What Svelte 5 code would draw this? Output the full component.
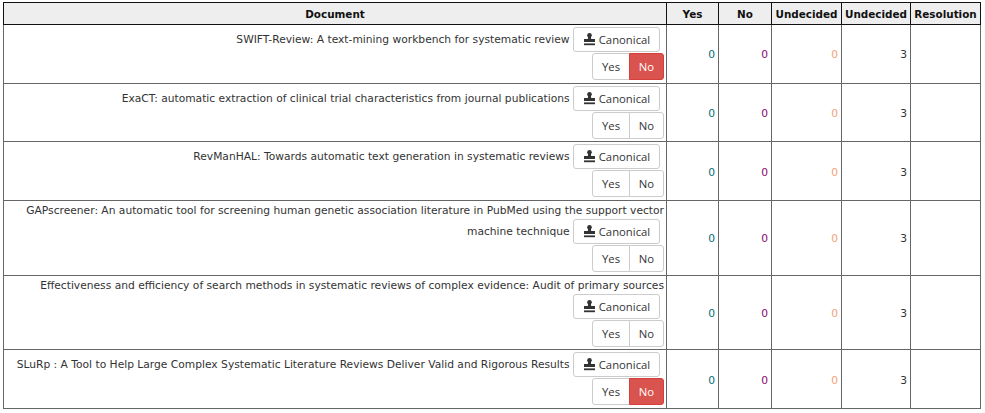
<script>
	const docs = [
		{ title: "SWIFT-Review: A text-mining workbench for systematic review", vote: "no" },
		{ title: "ExaCT: automatic extraction of clinical trial characteristics from journal publications", vote: "" },
		{ title: "RevManHAL: Towards automatic text generation in systematic reviews", vote: "" },
		{ title: "GAPscreener: An automatic tool for screening human genetic association literature in PubMed using the support vector machine technique", vote: "" },
		{ title: "Effectiveness and efficiency of search methods in systematic reviews of complex evidence: Audit of primary sources", vote: "" },
		{ title: "SLuRp : A Tool to Help Large Complex Systematic Literature Reviews Deliver Valid and Rigorous Results", vote: "no" }
	];
</script>

<table>
	<colgroup>
		<col class="c-doc" />
		<col class="c-yes" />
		<col class="c-no" />
		<col class="c-und" />
		<col class="c-und2" />
		<col />
	</colgroup>
	<thead>
		<tr>
			<th>Document</th>
			<th>Yes</th>
			<th>No</th>
			<th>Undecided</th>
			<th>Undecided</th>
			<th>Resolution</th>
		</tr>
	</thead>
	<tbody>
		{#each docs as doc}
			<tr>
				<td class="doc">
					{doc.title}
					<button class="btn canonical">
						<svg viewBox="0 0 13 13" width="13" height="13" aria-hidden="true">
							<circle cx="6.5" cy="2.3" r="2.3" />
							<path d="M5.2 3.5h2.6l.4 2.5h3.8v3H1V6h3.8z" />
							<rect x="1" y="10.4" width="11" height="1.8" />
						</svg>
						Canonical
					</button>
					<div class="group">
						<button class="btn yes">Yes</button><button class="btn no" class:active={doc.vote === "no"}>No</button>
					</div>
				</td>
				<td class="num yes-n">0</td>
				<td class="num no-n">0</td>
				<td class="num und-n">0</td>
				<td class="num">3</td>
				<td></td>
			</tr>
		{/each}
	</tbody>
</table>

<style>
	:global(body) {
		background: #fff;
		font-family: "DejaVu Sans", sans-serif;
		font-size: 10.7px;
		color: #333;
	}

	table {
		border-collapse: collapse;
		table-layout: fixed;
		width: 978px;
		margin: 2px 0 0 3px;
		border-top: 1px solid #111;
	}

	.c-doc { width: 663px; }
	.c-yes { width: 52px; }
	.c-no { width: 53px; }
	.c-und { width: 70px; }
	.c-und2 { width: 69px; }

	th {
		background: #eee;
		color: #111;
		font-size: 10.4px;
		font-weight: bold;
		height: 21px;
		padding: 0;
		border: 1px solid #111;
	}

	td {
		border: 1px solid #666;
		padding: 2px;
	}

	.doc {
		text-align: right;
		line-height: 16px;
	}

	.num {
		text-align: right;
		vertical-align: middle;
		padding-right: 3px;
		padding-top: 4px;
	}

	.yes-n { color: #00707a; }
	.no-n { color: #8a0a6a; }
	.und-n { color: #f0a27a; }

	.btn {
		font-family: "Open Sans", sans-serif;
		font-size: 11.3px;
		color: #333;
		background: #fff;
		border: 1px solid #ccc;
		height: 25px;
		padding: 0;
		vertical-align: middle;
	}

	.canonical {
		width: 87px;
		margin: 0 4px 1px 0;
		border-radius: 3px;
	}

	.canonical svg {
		vertical-align: -2px;
		fill: #333;
	}

	.group {
		display: flex;
		justify-content: flex-end;
		height: 27.67px;
	}

	.yes, .no {
		height: 27px;
		vertical-align: top;
	}

	.yes {
		width: 38px;
		border-radius: 3px 0 0 3px;
	}

	.no {
		width: 35px;
		margin-left: -1px;
		border-radius: 0 3px 3px 0;
	}

	.no.active {
		background: #d9534f;
		border-color: #d43f3a;
		color: #fff;
	}
</style>
